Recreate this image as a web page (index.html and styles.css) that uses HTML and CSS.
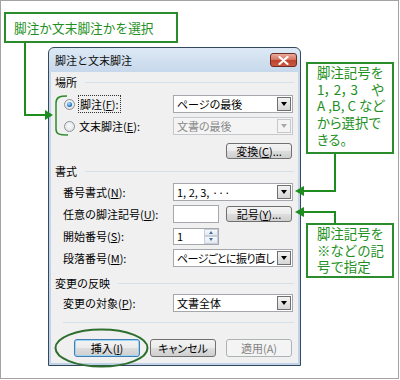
FILE: index.html
```html
<!DOCTYPE html>
<html lang="ja">
<head>
    <meta charset="UTF-8">
    <meta name="viewport" content="width=device-width, initial-scale=1.0">
    <title>脚注と文末脚注</title>
    <link rel="stylesheet" href="styles.css">
</head>
<body>
<div class="canvas">
    <div class="dialog">
        <div class="titlebar">
            <span class="title">脚注と文末脚注</span>
            <span class="close">
                <svg width="11" height="9" viewBox="0 0 11 9"><path d="M1.5 1 L9.5 8 M9.5 1 L1.5 8" stroke="#fff" stroke-width="2.2" stroke-linecap="round"/></svg>
            </span>
        </div>
        <div class="panel">
            <div class="group">場所</div>
            <div class="row row-radio first-radio">
                <label class="radio-label"><span class="radio checked"></span><span class="focus">脚注(<u>F</u>):</span></label>
                <div class="combo"><span class="value">ページの最後</span><span class="drop"></span></div>
            </div>
            <div class="row row-radio">
                <label class="radio-label"><span class="radio"></span><span>文末脚注(<u>E</u>):</span></label>
                <div class="combo disabled"><span class="value">文書の最後</span><span class="drop"></span></div>
            </div>
            <div class="btn-row convert">
                <button class="btn">変換(<u>C</u>)...</button>
            </div>

            <div class="group format">書式</div>
            <div class="row first-field">
                <span class="field-label">番号書式(<u>N</u>):</span>
                <div class="combo"><span class="value">1, 2, 3, &middot;&middot;&middot;</span><span class="drop"></span></div>
            </div>
            <div class="row">
                <span class="field-label">任意の脚注記号(<u>U</u>):</span>
                <div class="pair">
                    <span class="text-box"></span>
                    <button class="btn">記号(<u>Y</u>)...</button>
                </div>
            </div>
            <div class="row">
                <span class="field-label">開始番号(<u>S</u>):</span>
                <div class="spin">
                    <span class="value">1</span>
                    <span class="spin-btns"><span class="up"></span><span class="down"></span></span>
                </div>
            </div>
            <div class="row">
                <span class="field-label">段落番号(<u>M</u>):</span>
                <div class="combo"><span class="value tight">ページごとに振り直し</span><span class="drop"></span></div>
            </div>

            <div class="group apply">変更の反映</div>
            <div class="row apply-row">
                <span class="field-label">変更の対象(<u>P</u>):</span>
                <div class="combo"><span class="value">文書全体</span><span class="drop"></span></div>
            </div>

            <div class="separator"></div>

            <div class="actions">
                <button class="btn default">挿入(<u>I</u>)</button>
                <button class="btn">キャンセル</button>
                <button class="btn" disabled>適用(A)</button>
            </div>
        </div>
    </div>

    <div class="callout note-select">脚注か文末脚注かを選択</div>
    <div class="callout note-format">脚注記号を<br>1，&thinsp;2，&thinsp;3　や<br>A ,B, C など<br>から選択で<br>きる。</div>
    <div class="callout note-symbol">脚注記号を<br>※などの記<br>号で指定</div>

    <svg class="marks" width="400" height="380" viewBox="0 0 400 380">
        <g fill="none" stroke="#1f8c1f" stroke-width="2">
            <polyline points="25,43 25,115 46,115"/>
            <polyline points="335,154 335,191 304,191"/>
            <polyline points="335,223 335,212 304,212"/>
        </g>
        <g fill="#1f8c1f">
            <polygon points="45,110 53,115 45,120"/>
            <polygon points="304,186 295,191 304,196"/>
            <polygon points="304,207 295,212 304,217"/>
        </g>
        <path d="M67 96 C60 96 56 97 56 103 L56 129 C56 134 59 135 68 135" fill="none" stroke="#2c8a2c" stroke-width="1.5"/>
        <ellipse cx="101.5" cy="348" rx="46" ry="18.5" fill="none" stroke="#2e6f2e" stroke-width="2"/>
    </svg>
</div>
</body>
</html>
```

FILE: styles.css
```css
* {
    box-sizing: border-box;
}
body {
    margin: 0;
    background: #fff;
    font-family: "Noto Sans CJK JP", "Noto Sans", sans-serif;
    font-size: 11px;
    color: #000;
}
u {
    text-decoration: underline;
    text-underline-offset: 1px;
}
.canvas {
    position: relative;
    width: 399px;
    height: 379px;
    border: 1px solid #a3a3a3;
    padding: 46px 0 0 47px;
}

/* dialog window */
.dialog {
    width: 253px;
    height: 319px;
    display: flex;
    flex-direction: column;
    border: 1px solid #34495e;
    border-radius: 6px 6px 0 0;
    padding: 0 2px 2px;
    background: linear-gradient(#dde9f5, #c7d8eb 24px, #bfd2e8);
}
.titlebar {
    height: 24px;
    display: flex;
    align-items: center;
    justify-content: space-between;
    padding: 0 1px 0 4px;
}
.title {
    color: #111;
}
.close {
    width: 27px;
    height: 14px;
    display: flex;
    align-items: center;
    justify-content: center;
    border: 1px solid #6b2c22;
    border-radius: 3px;
    background: linear-gradient(#e9aa9a, #d57360 48%, #bd432c 52%, #cc5a40);
}
.close svg {
    display: block;
}
.panel {
    flex: 1;
    background: #f0f0f0;
    padding: 2px 4px 0 4px;
    display: flex;
    flex-direction: column;
}
.group {
    height: 16px;
    display: flex;
    align-items: center;
}
.group::after {
    content: "";
    flex: 1;
    height: 1px;
    margin-left: 8px;
    background: #d6e0ea;
}
.group.format {
    margin-top: 4px;
}
.group.apply {
    margin-top: 6px;
}
.row {
    height: 22px;
    display: grid;
    grid-template-columns: 118px 120px;
    align-items: center;
}
.first-radio {
    margin-top: 3px;
}
.first-field {
    margin-top: 2px;
}
.apply-row {
    margin-top: 1px;
}
.field-label {
    padding-left: 8px;
}
.radio-label {
    display: flex;
    align-items: center;
    padding-left: 9px;
}
.radio {
    position: relative;
    width: 11px;
    height: 11px;
    margin-right: 4px;
    border: 1px solid #8b9098;
    border-radius: 50%;
    background: radial-gradient(circle at 50% 40%, #fbfbfb, #d9dcdf);
}
.radio.checked::after {
    content: "";
    position: absolute;
    left: 2px;
    top: 2px;
    width: 5px;
    height: 5px;
    border-radius: 50%;
    background: radial-gradient(circle at 40% 35%, #bfe8ff, #2a7ccc 55%, #0b4384);
}
.focus {
    outline: 1px dotted #333;
    outline-offset: 0;
    padding: 0 1px;
}

/* combo boxes and inputs */
.combo {
    height: 18px;
    display: flex;
    align-items: center;
    border: 1px solid #a4a8ad;
    background: #fff;
    padding-left: 3px;
}
.combo .value {
    flex: 1;
    white-space: nowrap;
    overflow: hidden;
    font-feature-settings: "palt";
}
.combo .value.tight {
    letter-spacing: -0.6px;
}
.drop {
    width: 14px;
    height: 14px;
    margin-right: 1px;
    display: flex;
    align-items: center;
    justify-content: center;
    border: 1px solid #707070;
    background: linear-gradient(#f4f4f4, #d6d6d6);
}
.drop::before {
    content: "";
    border-left: 3.5px solid transparent;
    border-right: 3.5px solid transparent;
    border-top: 4px solid #000;
}
.combo.disabled {
    border-color: #c6c9cc;
    background: #f4f4f4;
    color: #8a8a8a;
}
.combo.disabled .drop {
    border-color: #c8c8c8;
    background: #f4f4f4;
}
.combo.disabled .drop::before {
    border-top-color: #a8a8a8;
}
.pair {
    display: flex;
    align-items: center;
    justify-content: space-between;
    padding-right: 1px;
}
.text-box {
    width: 46px;
    height: 18px;
    border: 1px solid #a4a8ad;
    background: #fff;
}
.spin {
    width: 46px;
    height: 17px;
    display: flex;
    align-items: center;
    border: 1px solid #a4a8ad;
    background: #fff;
    padding-left: 3px;
}
.spin .value {
    flex: 1;
}
.spin-btns {
    width: 14px;
    height: 15px;
    display: flex;
    flex-direction: column;
}
.spin-btns span {
    flex: 1;
    display: flex;
    align-items: center;
    justify-content: center;
    border: 1px solid #c5ced9;
    background: linear-gradient(#f7f9fb, #e4e9ef);
}
.spin-btns .up::before {
    content: "";
    border-left: 2.5px solid transparent;
    border-right: 2.5px solid transparent;
    border-bottom: 3px solid #4a6d9c;
}
.spin-btns .down::before {
    content: "";
    border-left: 2.5px solid transparent;
    border-right: 2.5px solid transparent;
    border-top: 3px solid #4a6d9c;
}

/* buttons */
.btn {
    width: 66px;
    height: 16px;
    padding: 0;
    border: 1px solid #707070;
    border-radius: 3px;
    background: linear-gradient(#f3f3f3, #ebebeb 48%, #dddddd 52%, #cfcfcf);
    font: inherit;
    line-height: 14px;
    color: #000;
    font-feature-settings: "palt";
}
.btn:disabled {
    border-color: #adb2b5;
    background: #f4f4f4;
    color: #838383;
}
.btn.default {
    border-color: #3c7fb1;
    box-shadow: inset 0 0 0 1px #9ed3f2;
}
.btn-row {
    display: flex;
    justify-content: flex-end;
    padding-right: 2px;
}
.convert {
    margin-top: 6px;
}
.separator {
    height: 1px;
    margin: 8px 0 0 8px;
    background: #d6e0ea;
}
.actions {
    display: flex;
    justify-content: flex-end;
    gap: 10px;
    margin-top: 16px;
    padding-right: 2px;
}
.actions .btn {
    height: 18px;
    line-height: 16px;
}

/* annotations */
.callout {
    position: absolute;
    border: 2px solid #2a8c2a;
    background: #fff;
    color: #239023;
    white-space: nowrap;
}
.note-select {
    left: 3px;
    top: 11px;
    width: 174px;
    height: 31px;
    padding-left: 8px;
    font-size: 12.7px;
    line-height: 27px;
}
.note-format {
    left: 305px;
    top: 61px;
    width: 88px;
    height: 92px;
    padding-left: 9px;
    font-size: 13.4px;
    line-height: 16.7px;
    font-feature-settings: "palt";
}
.note-symbol {
    left: 305px;
    top: 222px;
    width: 88px;
    height: 55px;
    padding-left: 9px;
    font-size: 13.4px;
    line-height: 16.7px;
}
.marks {
    position: absolute;
    left: -1px;
    top: -1px;
    pointer-events: none;
}
```
